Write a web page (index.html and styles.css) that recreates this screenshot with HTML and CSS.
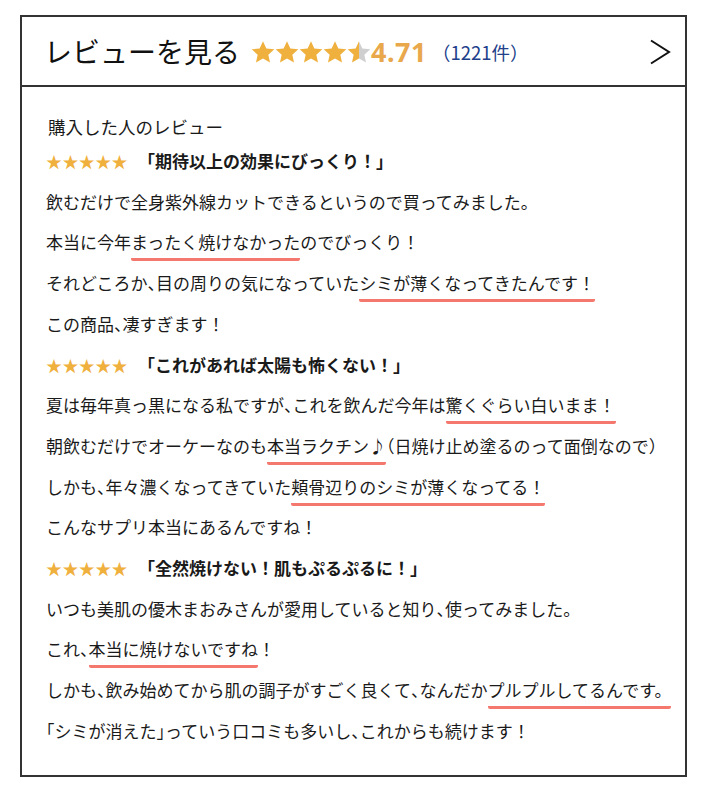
FILE: index.html
```html
<!DOCTYPE html>
<html lang="ja">
<head>
<meta charset="utf-8">
<title>レビューを見る</title>
<link rel="stylesheet" href="styles.css">
</head>
<body>
<div class="review-box">
  <div class="review-head">
    <span class="head-title">レビューを見る</span>
    <span class="head-stars">
      <svg class="hstar" viewBox="1 1 22 22"><path d="M12 1.2l3.2 7 7.6.8-5.7 5.1 1.6 7.5L12 17.8l-6.7 3.8 1.6-7.5L1.2 9l7.6-.8z"/></svg>
      <svg class="hstar" viewBox="1 1 22 22"><path d="M12 1.2l3.2 7 7.6.8-5.7 5.1 1.6 7.5L12 17.8l-6.7 3.8 1.6-7.5L1.2 9l7.6-.8z"/></svg>
      <svg class="hstar" viewBox="1 1 22 22"><path d="M12 1.2l3.2 7 7.6.8-5.7 5.1 1.6 7.5L12 17.8l-6.7 3.8 1.6-7.5L1.2 9l7.6-.8z"/></svg>
      <svg class="hstar" viewBox="1 1 22 22"><path d="M12 1.2l3.2 7 7.6.8-5.7 5.1 1.6 7.5L12 17.8l-6.7 3.8 1.6-7.5L1.2 9l7.6-.8z"/></svg>
      <svg class="hstar" viewBox="1 1 22 22"><defs><linearGradient id="part" x1="0" x2="1" y1="0" y2="0"><stop offset="0.5" stop-color="#efb03e"/><stop offset="0.5" stop-color="#cfcfcf"/></linearGradient></defs><path fill="url(#part)" d="M12 1.2l3.2 7 7.6.8-5.7 5.1 1.6 7.5L12 17.8l-6.7 3.8 1.6-7.5L1.2 9l7.6-.8z"/></svg>
    </span>
    <span class="head-score">4.71</span>
    <span class="head-count">（1221件）</span>
    <svg class="head-arrow" viewBox="0 0 22 26"><polyline points="2,1.5 20,13 2,24.5"/></svg>
  </div>
  <div class="review-body">
    <p class="intro">購入した人のレビュー</p>
    <div class="lines">
      <p class="rating"><span class="stars">★★★★★</span><span class="title">「期待以上の効果にびっくり！」</span></p>
      <p>飲むだけで全身紫外線カットできるというので買ってみました。</p>
      <p>本当に今年<span class="mark">まったく焼けなかった</span>のでびっくり！</p>
      <p>それどころか<span class="half">、</span>目の周りの気になっていた<span class="mark">シミが薄くなってきたんです！</span></p>
      <p>この商品<span class="half">、</span>凄すぎます！</p>
      <p class="rating"><span class="stars">★★★★★</span><span class="title">「これがあれば太陽も怖くない！」</span></p>
      <p>夏は毎年真っ黒になる私ですが<span class="half">、</span>これを飲んだ今年は<span class="mark">驚くぐらい白いまま！</span></p>
      <p>朝飲むだけでオーケーなのも<span class="mark">本当ラクチン♪</span><span class="half">（</span>日焼け止め塗るのって面倒なので）</p>
      <p>しかも<span class="half">、</span>年々濃くなってきていた<span class="mark">頬骨辺りのシミが薄くなってる！</span></p>
      <p>こんなサプリ本当にあるんですね！</p>
      <p class="rating"><span class="stars">★★★★★</span><span class="title">「全然焼けない！肌もぷるぷるに！」</span></p>
      <p>いつも美肌の優木まおみさんが愛用していると知り<span class="half">、</span>使ってみました。</p>
      <p>これ<span class="half">、</span><span class="mark">本当に焼けないですね</span>！</p>
      <p>しかも<span class="half">、</span>飲み始めてから肌の調子がすごく良くて<span class="half">、</span>なんだか<span class="mark">プルプルしてるんです。</span></p>
      <p><span class="half">「</span>シミが消えた<span class="half">」</span>っていう口コミも多いし<span class="half">、</span>これからも続けます！</p>
    </div>
  </div>
</div>
</body>
</html>
```

FILE: styles.css
```css
html, body {
  margin: 0;
  padding: 0;
  background: #ffffff;
}

body {
  font-family: "Noto Sans CJK JP", "Noto Sans", sans-serif;
  color: #1a1a1a;
}

.review-box {
  margin: 15px 21px 0 20px;
  border: 2px solid #333333;
}

.review-head {
  display: flex;
  align-items: center;
  height: 68px;
  padding: 0 14px 0 22px;
  border-bottom: 2px solid #333333;
}

.head-title {
  font-size: 28px;
  line-height: 1;
  color: #111111;
  margin-right: 11px;
}

.head-stars {
  display: flex;
  align-items: center;
  margin-top: 2px;
}

.hstar {
  width: 24px;
  height: 23px;
  fill: #efb03e;
}

.head-score {
  font-family: "Noto Sans", sans-serif;
  font-weight: 700;
  font-size: 27px;
  line-height: 1;
  color: #e9a84c;
  letter-spacing: 0.5px;
  margin-top: 1px;
}

.head-count {
  font-size: 18.5px;
  line-height: 1;
  color: #22408a;
  margin-left: 5px;
  margin-top: 2px;
}

.head-arrow {
  margin-left: auto;
  width: 22px;
  height: 26px;
  fill: none;
  stroke: #111111;
  stroke-width: 2;
  margin-top: 2px;
}

.review-body {
  padding: 27px 0 31px 24px;
}

.review-body p {
  margin: 0;
  font-size: 17px;
  line-height: 26px;
  white-space: nowrap;
}

.review-body .intro {
  font-size: 17.5px;
  padding-left: 2px;
  margin-bottom: 8px;
}

.lines {
  display: flex;
  flex-direction: column;
  gap: 14.71px;
}

.stars {
  color: #efb03e;
  font-size: 16px;
  letter-spacing: 0.4px;
}

.title {
  font-weight: 700;
  margin-left: 10px;
}

.half {
  font-feature-settings: "halt";
}

.mark {
  padding-bottom: 7px;
  background-image: linear-gradient(#f4786e, #f4786e);
  background-size: 100% 3px;
  background-position: left bottom;
  background-repeat: no-repeat;
  border-radius: 2px;
}
```
